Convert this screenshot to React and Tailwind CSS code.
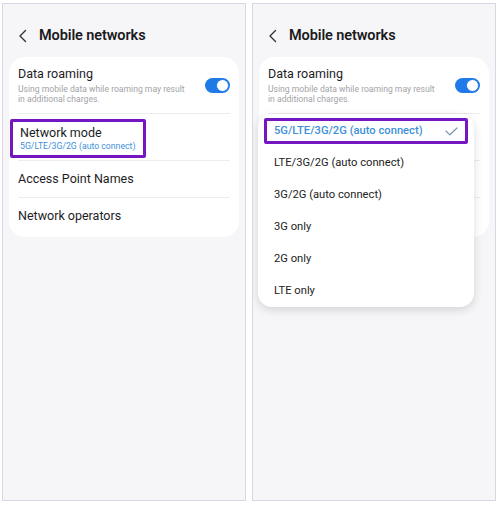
import React from 'react';

const PURPLE = 'border-[#7417c2]';

const Chevron = () => (
  <svg width="10" height="14" viewBox="0 0 10 14" fill="none" className="shrink-0">
    <path d="M7.5 1.5 L2 7 L7.5 12.5" stroke="#333" strokeWidth="1.4" strokeLinecap="round" strokeLinejoin="round" />
  </svg>
);

const Toggle = () => (
  <div className="relative w-[25px] h-[15px] rounded-full bg-[#1f7ae8] shrink-0">
    <div className="absolute right-[1px] top-[1px] w-[13px] h-[13px] rounded-full bg-white border-[1.5px] border-[#1f7ae8]" />
  </div>
);

const Divider = () => <div className="h-px bg-[#ececef] mx-[9px]" />;

// Carta de definições, partilhada pelos dois ecrãs
// covered = as linhas estão tapadas pelo menu, não mostra o texto
const SettingsCard = ({ highlight, covered }) => {
  const hide = covered ? 'invisible' : '';
  return (
    <div className="mx-[6px] mt-[8px] bg-white rounded-[16px] pb-[2px]">
      <div className="flex items-center justify-between pl-[9px] pr-[9px] pt-[9px] pb-[9px]">
        <div>
          <div className="text-[12.5px] text-[#1d1d1f] leading-[16px]">Data roaming</div>
          <div className="text-[8.6px] text-[#a3a3a8] leading-[10px] mt-[2px] w-[172px]">
            Using mobile data while roaming may result in additional charges.
          </div>
        </div>
        <Toggle />
      </div>
      <Divider />
      <div className="px-[1px] pt-[5px] pb-[2px]">
        <div className={`w-[136px] rounded-[2px] px-[7px] py-[3px] ${highlight ? `border-[3px] ${PURPLE}` : 'border-[3px] border-transparent'} ${hide}`}>
          <div className="text-[12.5px] text-[#1d1d1f] leading-[15px]">Network mode</div>
          <div className="text-[8.7px] text-[#3d8fd8] leading-[12px] whitespace-nowrap">5G/LTE/3G/2G (auto connect)</div>
        </div>
      </div>
      <Divider />
      <div className={`px-[9px] h-[36px] flex items-center text-[12.5px] text-[#1d1d1f] ${hide}`}>Access Point Names</div>
      <Divider />
      <div className={`px-[9px] h-[37px] flex items-center text-[12.5px] text-[#1d1d1f] ${hide}`}>Network operators</div>
    </div>
  );
};

const Header = () => (
  <div className="flex items-center gap-[11px] pl-[15px] pt-[18px] h-[45px]">
    <Chevron />
    <span className="text-[14.5px] font-semibold text-[#1b1b1d] tracking-[-0.1px]">Mobile networks</span>
  </div>
);

const options = [
  'LTE/3G/2G (auto connect)',
  '3G/2G (auto connect)',
  '3G only',
  '2G only',
  'LTE only',
];

const Dropdown = () => (
  <div className="absolute left-[5px] top-[110px] w-[216px] bg-white rounded-[14px] shadow-[0_3px_10px_rgba(0,0,0,0.14)] pt-[4px] pb-0">
    <div className={`mx-[6px] mb-[3px] h-[26px] border-[3px] ${PURPLE} rounded-[2px] flex items-center justify-between pl-[7px] pr-[7px]`}>
      <span className="text-[11.2px] font-medium text-[#3d8fd8]">5G/LTE/3G/2G (auto connect)</span>
      <svg width="13" height="9" viewBox="0 0 13 9" fill="none">
        <path d="M1 4 L4.8 7.8 L12 1" stroke="#7a96b3" strokeWidth="1.2" strokeLinecap="round" strokeLinejoin="round" />
      </svg>
    </div>
    {options.map((o) => (
      <div key={o} className="h-[32px] flex items-center pl-[16px] text-[11.2px] text-[#222]">
        {o}
      </div>
    ))}
  </div>
);

const Phone = ({ children }) => (
  <div className="relative w-[244px] h-[498px] border-[1.5px] border-[#ddd4e4] bg-[#f6f5f8] overflow-hidden">
    {children}
  </div>
);

export default function App() {
  return (
    <div
      className="w-[500px] h-[506px] bg-white flex gap-[6px] pl-[2px] pt-[3px]"
      style={{ fontFamily: 'Roboto, "Noto Sans", sans-serif' }}
    >
      <Phone>
        <Header />
        <SettingsCard highlight />
      </Phone>
      <Phone>
        <Header />
        <SettingsCard covered />
        <Dropdown />
      </Phone>
    </div>
  );
}
